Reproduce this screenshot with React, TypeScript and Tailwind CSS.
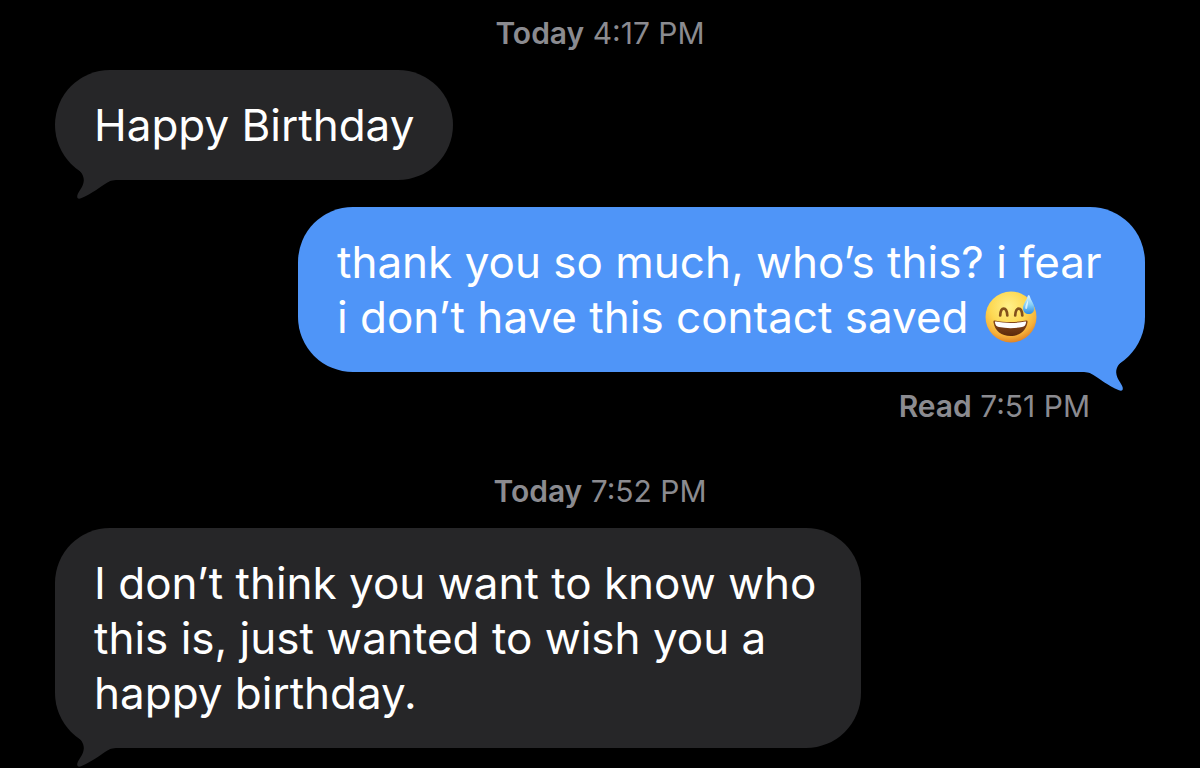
import type { ReactNode } from "react";
import clsx from "clsx";

type BubbleProps = {
  side: "left" | "right";
  className?: string;
  children: ReactNode;
};

type StampProps = {
  label: string;
  time: string;
  className?: string;
};

function Tail({ side }: { side: "left" | "right" }) {
  return (
    <svg
      viewBox="0 0 66 40"
      aria-hidden="true"
      className={clsx(
        "absolute top-full -mt-5 h-10 w-[66px]",
        side === "left" ? "left-0 fill-[#262628]" : "right-0 -scale-x-100 fill-[#4f95f8]"
      )}
    >
      <path d="M21 0 L21 7 C26 11.500 29 15.500 28.800 20.500 C28.500 27 23.500 31 22.300 35.500 C21.700 38.500 23.500 39.300 26 38.300 C37 33.500 46 26.500 52 22.700 C56 20.300 58 20 66 20 L66 0 Z" />
    </svg>
  );
}

function Bubble({ side, className, children }: BubbleProps) {
  return (
    <div
      className={clsx(
        "relative rounded-[55px] px-[39px] pt-7 pb-[27px] text-[44px] leading-[55px] text-white",
        side === "left" ? "self-start bg-[#262628]" : "self-end bg-[#4f95f8]",
        className
      )}
    >
      <p>{children}</p>
      <Tail side={side} />
    </div>
  );
}

function Stamp({ label, time, className }: StampProps) {
  return (
    <p className={clsx("text-[30px] leading-9 text-[#8b8b90]", className)}>
      <span className="font-semibold">{label}</span> {time}
    </p>
  );
}

function SweatSmile() {
  return (
    <svg
      viewBox="0 0 52 52"
      role="img"
      aria-label="grinning face with sweat"
      className="-mt-2 ml-1 inline-block size-[52px] align-middle"
    >
      <defs>
        <radialGradient id="face" cx="0.45" cy="0.3" r="0.72">
          <stop offset="0" stopColor="#fff08a" />
          <stop offset="0.5" stopColor="#fdd852" />
          <stop offset="0.8" stopColor="#f6b13a" />
          <stop offset="1" stopColor="#df7e24" />
        </radialGradient>
        <linearGradient id="drop" x1="0" y1="0" x2="0" y2="1">
          <stop offset="0" stopColor="#dff5ff" />
          <stop offset="0.5" stopColor="#86cff8" />
          <stop offset="1" stopColor="#2c8de4" />
        </linearGradient>
        <linearGradient id="mouth" x1="0" y1="0" x2="0" y2="1">
          <stop offset="0" stopColor="#8a4b1c" />
          <stop offset="1" stopColor="#5c2a0c" />
        </linearGradient>
      </defs>
      <circle cx="26" cy="26" r="25.500" fill="url(#face)" />
      <g fill="none" stroke="#82501b" strokeWidth="2.700" strokeLinecap="round">
        <path d="M15.200 24.500 C15.500 19.500 17 17.700 18.700 17.700 C20.500 17.700 22 19.500 22.300 24.500" />
        <path d="M30.200 24.500 C30.500 19.500 32 17.700 33.700 17.700 C35.500 17.700 37 19.500 37.300 24.500" />
      </g>
      <path
        d="M10 29.500 C8.700 29.200 8.200 30 8.500 31.500 C10 40 16.500 45 25.500 45 C34.500 45 41 40 42.500 31.500 C42.800 30 42.300 29.200 41 29.500 C31 31.500 20 31.500 10 29.500 Z"
        fill="url(#mouth)"
      />
      <path
        d="M10.500 30.600 C20 32.500 31 32.500 40.500 30.600 C41 30.500 41.200 31 41 31.800 C40.400 34.500 39.500 35.500 37 36 C29.500 37.500 21.500 37.500 14 36 C11.500 35.500 10.600 34.500 10 31.800 C9.800 31 10 30.500 10.500 30.600 Z"
        fill="#fff"
      />
      <path
        d="M43.700 4.200 C44.300 4.200 44.600 4.700 44.900 5.500 C46 9.500 49.300 12.800 49.300 17.500 C49.300 21 46.800 23 43.700 23 C40.600 23 38 21 38 17.500 C38 12.800 41.500 9.500 42.500 5.500 C42.800 4.700 43.100 4.200 43.700 4.200 Z"
        fill="url(#drop)"
      />
      <path d="M43 9 C42 12 40 14 40.200 17 C40.300 18.500 42 18.500 42.300 16.500 C42.600 14 43.300 12 43 9 Z" fill="#fff" opacity="0.700" />
    </svg>
  );
}

export default function App() {
  return (
    <main className="flex min-h-screen flex-col bg-black px-[55px] pt-[15px] font-['Inter',sans-serif]">
      <Stamp label="Today" time="4:17 PM" className="self-center" />

      <Bubble side="left" className="mt-[19px]">
        Happy Birthday
      </Bubble>

      <Bubble side="right" className="mt-[27px] max-w-[847px]">
        thank you so much, who’s this? i fear i don’t have this contact saved <SweatSmile />
      </Bubble>
      <Stamp label="Read" time="7:51 PM" className="mt-4 mr-[55px] self-end" />

      <Stamp label="Today" time="7:52 PM" className="mt-[49px] self-center" />

      <Bubble side="left" className="mt-[19px] max-w-[806px]">
        I don’t think you want to know who this is, just wanted to wish you a happy birthday.
      </Bubble>
    </main>
  );
}
